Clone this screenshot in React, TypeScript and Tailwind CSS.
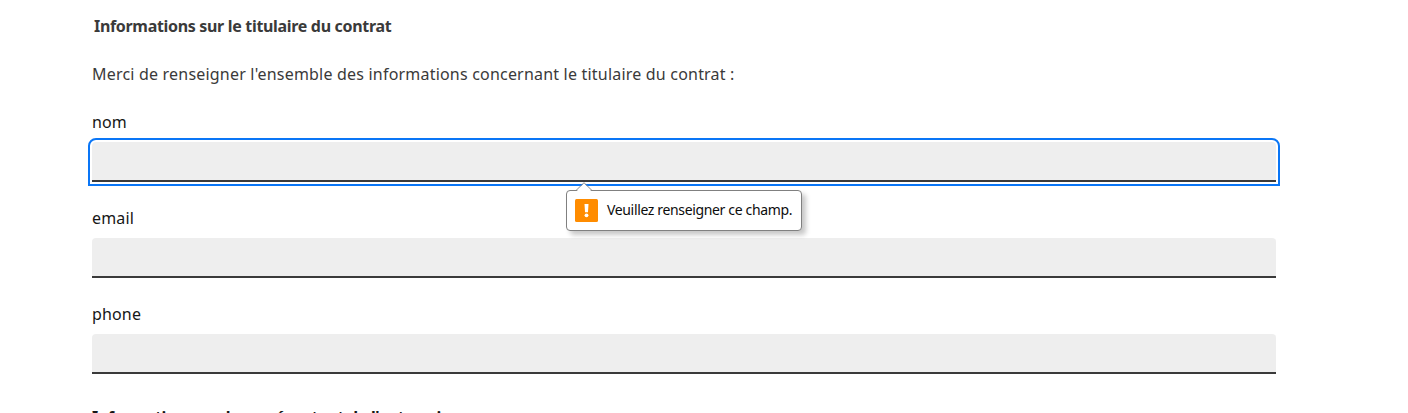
function Tooltip() {
  return (
    <div
      role="alert"
      className="absolute left-[474px] top-[48px] z-10 flex h-[41px] w-[236px] items-center rounded-[4px] border border-[#808080] bg-white pl-[8px] shadow-[4px_4px_5px_rgba(0,0,0,0.22)]"
    >
      <svg className="absolute -top-[9px] left-[8px]" width="20" height="10" viewBox="0 0 20 10">
        <path d="M1 10 L9 1 L17 10 Z" fill="#fff" />
        <path d="M1 8.5 L9 0.7 L17 8.5" fill="none" stroke="#8a8a8a" strokeWidth="1" />
      </svg>
      <svg width="23" height="23" viewBox="0 0 23 23">
        <rect width="23" height="23" rx="1.5" fill="#ff8c00" />
        <path d="M9.5 5h4l-.5 8.2h-3z" fill="#fff" />
        <circle cx="11.5" cy="16.3" r="1.9" fill="#fff" />
      </svg>
      <span className="mb-[2px] ml-[9px] whitespace-nowrap font-['Noto_Sans',sans-serif] text-[14px] leading-5 tracking-[-0.35px] text-[#0c0c0c]">
        Veuillez renseigner ce champ.
      </span>
    </div>
  );
}

function Field({ name, focused = false }: { name: string; focused?: boolean }) {
  return (
    <div className="mb-6 flex flex-col gap-2">
      <label htmlFor={name} className="text-[16px] leading-6 tracking-[0.15px] text-[#161616]">
        {name}
      </label>
      <div className="relative">
        <input
          id={name}
          className={
            focused
              ? "block h-10 w-full rounded-t-[4px] bg-[#eeeeee] px-4 shadow-[inset_0_-2px_0_0_#3a3a3a] outline-2 outline-offset-2 outline-[#0a76f6]"
              : "block h-10 w-full rounded-t-[4px] bg-[#eeeeee] px-4 shadow-[inset_0_-2px_0_0_#3a3a3a] outline-none"
          }
        />
        {focused && <Tooltip />}
      </div>
    </div>
  );
}

export default function App() {
  return (
    <main className="h-[413px] w-full overflow-hidden bg-white px-[92px] pt-[14px] font-['Noto_Sans',sans-serif] text-[16px] leading-6 text-[#3a3a3a]">
      <form className="w-[1184px]">
        <h2 className="mb-6 pl-[2px] font-bold tracking-[-0.32px]">
          Informations sur le titulaire du contrat
        </h2>
        <p className="mb-6 tracking-[0.2px]">
          Merci de renseigner l'ensemble des informations concernant le titulaire du contrat :
        </p>
        <Field name="nom" focused />
        <Field name="email" />
        <Field name="phone" />
        <h2 className="mt-[31px] font-bold tracking-[-0.32px] text-[#161616]">
          Informations sur le représentant de l'entreprise
        </h2>
      </form>
    </main>
  );
}
